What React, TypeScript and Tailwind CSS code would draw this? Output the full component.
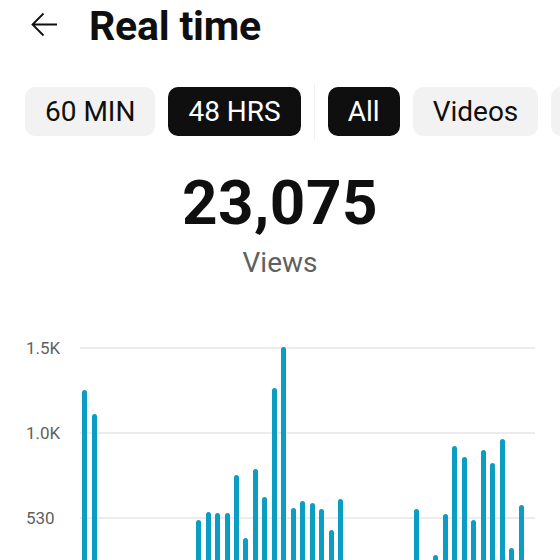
import React from "react";

const BASE = 603;
const tops: number[] = [
  391, 415, 575, 590, 585, 595, 580, 592, 588, 596, 584, 590,
  521, 513, 514, 514, 476, 539, 470, 498, 389, 348, 509, 502,
  504, 510, 531, 500, 590, 595, 585, 598, 588, 592, 580, 510,
  585, 556, 515, 447, 458, 521, 451, 464, 440, 549, 506, 575,
];

function Chip({ label, active }: { label: string; active?: boolean }) {
  return (
    <div
      className={
        active
          ? "h-[49px] shrink-0 flex items-center px-5 rounded-[10px] bg-[#0f0f0f] text-white text-[28px] font-normal"
          : "h-[49px] shrink-0 flex items-center px-5 rounded-[10px] bg-[#f2f2f2] text-[#0f0f0f] text-[28px] font-normal"
      }
    >
      {label}
    </div>
  );
}

export default function App() {
  return (
    <div
      className="w-[560px] h-[560px] overflow-hidden bg-white text-[#0f0f0f]"
      style={{ fontFamily: "Roboto, 'Noto Sans', sans-serif" }}
    >
      <div className="flex items-center h-[48px] pl-[31px] pt-[1px]">
        <svg width="27" height="25" viewBox="0 0 27 25" fill="none" className="shrink-0">
          <path d="M26 12.5H1.5M12.5 1.5L1.5 12.5L12.5 23.5" stroke="#0f0f0f" strokeWidth="1.8" />
        </svg>
        <div className="ml-[31px] mt-[4px] text-[41px] font-bold leading-none tracking-[-0.2px]">Real time</div>
      </div>

      <div className="flex items-center gap-[13px] pl-[25px] mt-[39px] h-[49px]">
        <Chip label="60 MIN" />
        <Chip label="48 HRS" active />
        <div className="w-px h-[56px] bg-[#eeeeee] shrink-0" />
        <Chip label="All" active />
        <Chip label="Videos" />
        <Chip label="Shorts" />
      </div>

      <div className="flex flex-col items-center mt-[36px]">
        <div className="text-[62px] font-bold leading-none tracking-[0.5px]">23,075</div>
        <div className="text-[28px] text-[#606060] leading-none mt-[15px]">Views</div>
      </div>

      <div className="relative mt-[70px] h-[255px] ml-[80px] w-[455px]">
        <div className="absolute inset-0 flex flex-col">
          <div className="h-[85px] border-t-2 border-[#ececec] relative">
            <span className="absolute left-[-54px] top-[-13px] text-[17px] text-[#5f5f5f]">1.5K</span>
          </div>
          <div className="h-[85px] border-t-2 border-[#ececec] relative">
            <span className="absolute left-[-54px] top-[-13px] text-[17px] text-[#5f5f5f]">1.0K</span>
          </div>
          <div className="h-[85px] border-t-2 border-[#ececec] relative">
            <span className="absolute left-[-54px] top-[-13px] text-[17px] text-[#5f5f5f]">530</span>
          </div>
        </div>
        <div className="absolute inset-0 flex items-end">
          {tops.map((t, i) => (
            <div key={i} className="flex-1 flex justify-center items-end h-full">
              <div
                className="w-[5px] rounded-t-[3px] bg-[#0b9dc3]"
                style={{ height: `${BASE - t}px` }}
              />
            </div>
          ))}
        </div>
      </div>
    </div>
  );
}
